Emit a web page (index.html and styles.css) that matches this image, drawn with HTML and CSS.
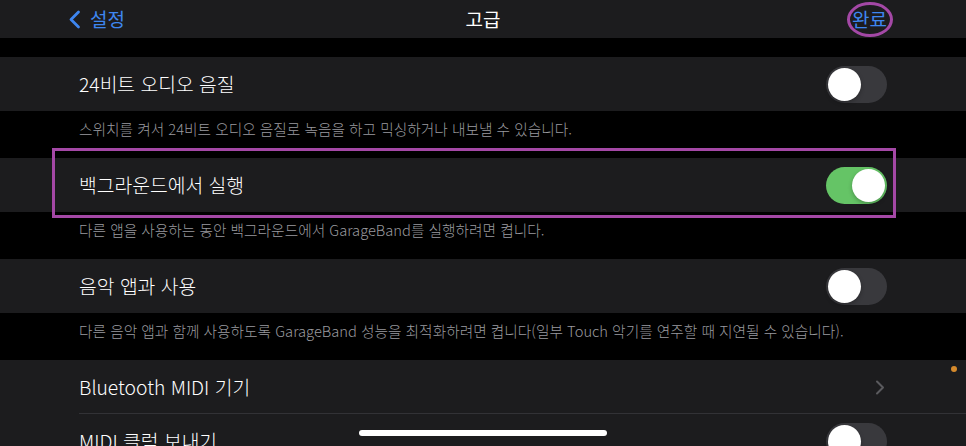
FILE: index.html
```html
<!DOCTYPE html>
<html lang="ko">
<head>
<meta charset="utf-8">
<link rel="stylesheet" href="styles.css">
</head>
<body>
<div class="screen">
  <header class="nav">
    <div class="nav-left">
      <svg class="back-chev" width="13" height="19" viewBox="0 0 13 19"><path d="M10.5 2 L3 9.5 L10.5 17" fill="none" stroke="#3e86f0" stroke-width="2.8" stroke-linecap="round" stroke-linejoin="round"/></svg>
      <span class="nav-link">설정</span>
    </div>
    <div class="nav-title">고급</div>
    <div class="nav-right"><span class="nav-link">완료</span></div>
  </header>

  <div class="spacer"></div>

  <div class="row">
    <span class="label">24비트 오디오 음질</span>
    <span class="toggle"><span class="knob"></span></span>
  </div>
  <div class="footer">스위치를 켜서 24비트 오디오 음질로 녹음을 하고 믹싱하거나 내보낼 수 있습니다.</div>

  <div class="row">
    <span class="label">백그라운드에서 실행</span>
    <span class="toggle on"><span class="knob"></span></span>
  </div>
  <div class="footer">다른 앱을 사용하는 동안 백그라운드에서 GarageBand를 실행하려면 켭니다.</div>

  <div class="row">
    <span class="label">음악 앱과 사용</span>
    <span class="toggle"><span class="knob"></span></span>
  </div>
  <div class="footer">다른 음악 앱과 함께 사용하도록 GarageBand 성능을 최적화하려면 켭니다(일부 Touch 악기를 연주할 때 지연될 수 있습니다).</div>

  <div class="group">
    <div class="row sep">
      <span class="label">Bluetooth MIDI 기기</span>
      <svg class="chev" width="10" height="15" viewBox="0 0 10 15"><path d="M2 1.5 L8 7.5 L2 13.5" fill="none" stroke="#5a5a5e" stroke-width="2" stroke-linecap="round" stroke-linejoin="round"/></svg>
    </div>
    <div class="row">
      <span class="label">MIDI 클럭 보내기</span>
      <span class="toggle"><span class="knob"></span></span>
    </div>
  </div>

  <div class="mark-rect"></div>
  <div class="mark-ellipse"></div>
  <div class="dot"></div>
  <div class="home-bar"></div>
</div>
</body>
</html>
```

FILE: styles.css
```css
* { box-sizing: border-box; }
html, body { margin: 0; padding: 0; background: #000; }
body {
  font-family: "Noto Sans CJK KR", "Noto Sans", sans-serif;
  color: #fff;
}
.screen {
  position: relative;
  width: 966px;
  height: 446px;
  overflow: hidden;
  background: #000;
}
.nav {
  height: 38px;
  background: #1c1c1e;
  display: grid;
  grid-template-columns: 1fr auto 1fr;
  align-items: center;
  padding: 0 79px;
}
.nav-left { display: flex; align-items: center; gap: 9px; margin-left: -11px; }
.back-chev { display: block; margin-top: 1px; }
.nav-link { color: #3e86f0; font-size: 19px; line-height: 24px; }
.nav-title { font-size: 19px; line-height: 24px; color: #fff; }
.nav-right { display: flex; justify-content: flex-end; }
.spacer { height: 19px; }
.row {
  height: 54px;
  background: #1c1c1e;
  display: flex;
  align-items: center;
  justify-content: space-between;
  padding: 0 79px 0 79px;
}
.label { font-size: 19.3px; line-height: 26px; color: #fff; font-weight: 300; }
.footer {
  height: 47px;
  padding: 7px 0 0 79px;
  font-size: 14.7px;
  line-height: 22px;
  color: #9a9a9f;
  font-weight: 300;
}
.group .row.sep {
  position: relative;
  height: 54px;
  padding-right: 81px;
}
.group .row.sep::after {
  content: "";
  position: absolute;
  left: 79px;
  right: 0;
  bottom: 0;
  height: 1px;
  background: #323236;
}
.chev { display: block; }
.toggle {
  position: relative;
  width: 61px;
  height: 37px;
  border-radius: 19px;
  background: #39393d;
  flex: none;
}
.knob {
  position: absolute;
  top: 2px;
  left: 2px;
  width: 33px;
  height: 33px;
  border-radius: 50%;
  background: #fff;
  box-shadow: 0 2px 4px rgba(0,0,0,0.25);
}
.toggle.on { background: #65c466; }
.toggle.on .knob { left: 26px; }
.mark-rect {
  position: absolute;
  left: 52px;
  top: 148px;
  width: 844px;
  height: 70px;
  border: 3px solid #a448a6;
}
.mark-ellipse {
  position: absolute;
  left: 847px;
  top: 2px;
  width: 46px;
  height: 35px;
  border: 3px solid #a448a6;
  border-radius: 50%;
}
.dot {
  position: absolute;
  left: 951px;
  top: 366px;
  width: 6px;
  height: 6px;
  border-radius: 50%;
  background: #d58a2c;
}
.home-bar {
  position: absolute;
  left: 359px;
  top: 430px;
  width: 248px;
  height: 6px;
  border-radius: 3px;
  background: #fff;
}
```
